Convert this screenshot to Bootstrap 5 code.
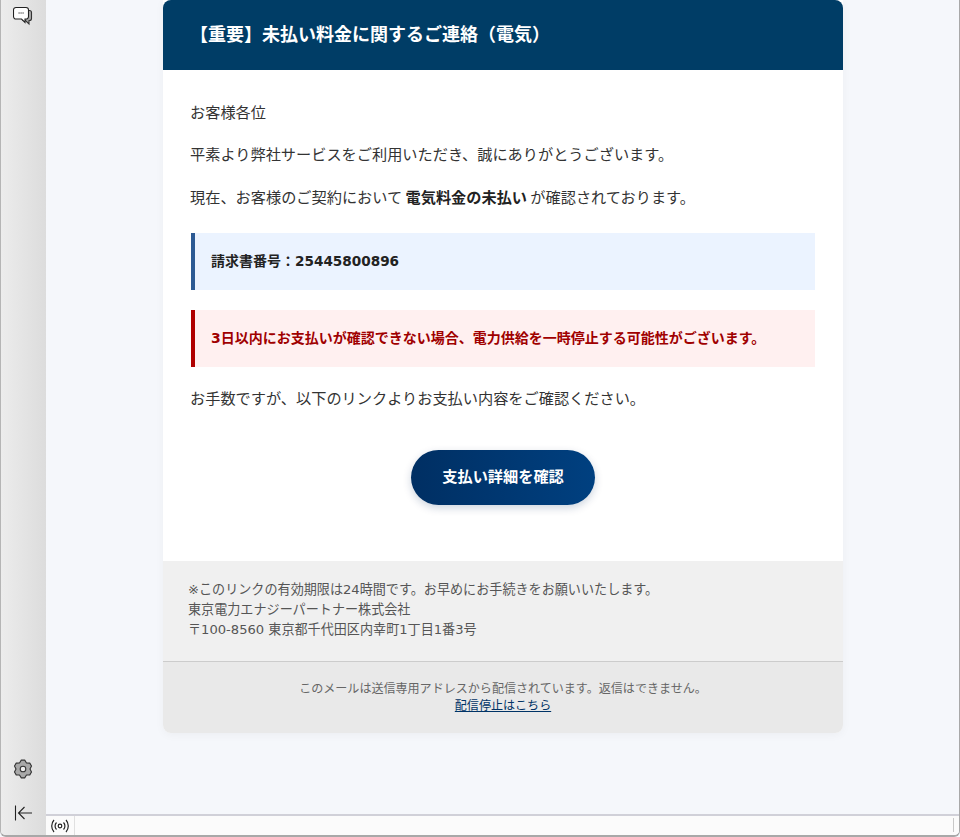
<!DOCTYPE html>
<html lang="ja">
<head>
<meta charset="utf-8">
<title>未払い料金</title>
<link href="https://cdn.jsdelivr.net/npm/bootstrap@5.3.0/dist/css/bootstrap.min.css" rel="stylesheet">
<style>
html,body{height:100%;overflow:hidden}
body{font-family:"DejaVu Sans","Noto Sans CJK JP",sans-serif;background:#f5f7fb;color:#333}
.app-frame{height:837px;width:960px;border-left:1px solid #b5b5b5;border-right:1px solid #a8a8a8;border-bottom:2px solid #a8a8a8;border-bottom-left-radius:6px;border-bottom-right-radius:6px;overflow:hidden}
.side-rail{width:45px;flex:none;background:linear-gradient(90deg,#ececec,#dcdcdc);padding:6px 1px 12px 0}
.rail-btn{width:20px;height:20px;display:block}
.main-pane{min-width:0}
.mail-scroll{height:814px;overflow:hidden;background:#f5f7fb}
.mail-card{width:680px;height:733px;margin-left:117px;background:#fff;border-radius:0 0 8px 8px;box-shadow:0 2px 10px rgba(0,0,0,.04)}
.mail-head{height:70px;background:#003d66;color:#fff;padding:0 27px 2px;border-radius:8px 8px 0 0;font-size:18px;font-weight:700}
.mail-body{height:491px;padding:31px 28px 0;font-size:15.2px;line-height:24.32px;color:#333}
.mail-body p{margin:0 0 18px -1px;word-spacing:-1.5px}
.mail-body strong{color:#222}
.note-box{height:57px;padding:0 16px;border-left:4px solid #2c5a94;background:#ebf3ff;font-size:14px;font-weight:700;color:#222;margin:23px 0 20px}
.note-box.danger-tone{border-left-color:#b00000;background:#fff0f0;color:#a00000;margin-top:0;margin-bottom:20px}
.pay-row{font-size:0;line-height:0}
.pay-btn{width:184px;height:55px;margin-top:21px;border-radius:28px;background:linear-gradient(90deg,#002f63,#004080);color:#fff;font-size:15.2px;font-weight:700;border:0;box-shadow:0 3px 8px rgba(0,40,90,.2)}
.pay-btn:hover{color:#fff}
.num-run{font-size:13.6px}
.foot-info{height:100px;padding:19px 25px 0;background:#f0f0f0;font-size:13.1px;line-height:20px;color:#555}
.foot-legal{height:72px;padding:19px 0 0;border-top:1px solid #ccc;background:#e9e9e9;border-radius:0 0 8px 8px;font-size:12.05px;line-height:17px;color:#666}
.foot-legal a{color:#003366}
.status-strip{height:21px;background:#fbfbfb;border-top:2px solid #d0d0d8}
.status-cell{width:29px;border-right:1px solid #e0e0e0}
.grip-line{width:1px;height:14px;background:#c8c8c8;margin:2px 5px 0 auto}
.rail-gap{margin-top:24px}
</style>
</head>
<body>
<div class="app-frame d-flex">
  <aside class="side-rail d-flex flex-column align-items-center">
    <svg class="rail-btn" viewBox="0 0 20 20" fill="none" stroke="#222" stroke-width="1.1" aria-label="コメント">
      <path d="M15 4.500h1.500a2 2 0 0 1 2 2v6a2 2 0 0 1-2 2h-.5v3.500l-3.500-3.500H10z" fill="#aaa" stroke="#333"/>
      <path d="M3 1.500h10a2.500 2.500 0 0 1 2.500 2.500v6.500a2.500 2.500 0 0 1-2.500 2.500h-1v3.500l-3.500-3.500H3a2.500 2.500 0 0 1-2.500-2.500V4A2.500 2.500 0 0 1 3 1.500z" fill="#fff"/>
      <path d="M5.500 7h1.200M7.500 7h1.200M9.500 7h1.200" stroke-width="1"/>
    </svg>
    <svg class="rail-btn mt-auto" viewBox="0 0 20 20" fill="#a8a8a8" stroke="#333" stroke-width="1.100" stroke-linejoin="round" aria-label="設定">
      <polygon points="8.280,1.160 11.720,1.160 13.500,3.940 16.790,4.100 18.510,7.070 17,10 18.510,12.930 16.790,15.900 13.500,16.060 11.720,18.840 8.280,18.840 6.500,16.060 3.210,15.900 1.490,12.930 3,10 1.490,7.070 3.210,4.100 6.500,3.940"/>
      <circle cx="10" cy="10" r="2.800" fill="#eee"/>
    </svg>
    <svg class="rail-btn rail-gap" viewBox="0 0 20 20" fill="none" stroke="#222" stroke-width="1.100" aria-label="折りたたむ">
      <path d="M2.500 2.500v15M19 10H5.500M11.500 4l-6 6 6 6"/>
    </svg>
  </aside>
  <div class="main-pane flex-grow-1 d-flex flex-column">
    <div class="mail-scroll">
      <div class="mail-card">
        <div class="mail-head d-flex align-items-center">【重要】未払い料金に関するご連絡（電気）</div>
        <div class="mail-body">
          <p>お客様各位</p>
          <p>平素より弊社サービスをご利用いただき、誠にありがとうございます。</p>
          <p>現在、お客様のご契約において <strong>電気料金の未払い</strong> が確認されております。</p>
          <div class="note-box d-flex align-items-center"><span>請求書番号：<span class="num-run">25445800896</span></span></div>
          <div class="note-box danger-tone d-flex align-items-center">3日以内にお支払いが確認できない場合、電力供給を一時停止する可能性がございます。</div>
          <p>お手数ですが、以下のリンクよりお支払い内容をご確認ください。</p>
          <div class="pay-row text-center"><a href="#" class="btn pay-btn d-inline-flex align-items-center justify-content-center">支払い詳細を確認</a></div>
        </div>
        <div class="foot-info">※このリンクの有効期限は24時間です。お早めにお手続きをお願いいたします。<br>東京電力エナジーパートナー株式会社<br>〒100-8560 東京都千代田区内幸町1丁目1番3号</div>
        <div class="foot-legal text-center">このメールは送信専用アドレスから配信されています。返信はできません。<br><a href="#">配信停止はこちら</a></div>
      </div>
    </div>
    <div class="status-strip d-flex">
      <div class="status-cell d-flex align-items-center justify-content-center">
        <svg width="18" height="14" viewBox="0 0 18 14" fill="none" stroke="#222" stroke-width="1.200" aria-label="接続">
          <circle cx="9" cy="7" r="1.800"/><path d="M5.500 3.500a5 5 0 0 0 0 7M12.500 3.500a5 5 0 0 1 0 7M3 1a9 9 0 0 0 0 12M15 1a9 9 0 0 1 0 12"/>
        </svg>
      </div>
      <div class="grip-line"></div>
    </div>
  </div>
</div>
<script src="https://cdn.jsdelivr.net/npm/bootstrap@5.3.0/dist/js/bootstrap.bundle.min.js"></script>
</body>
</html>
